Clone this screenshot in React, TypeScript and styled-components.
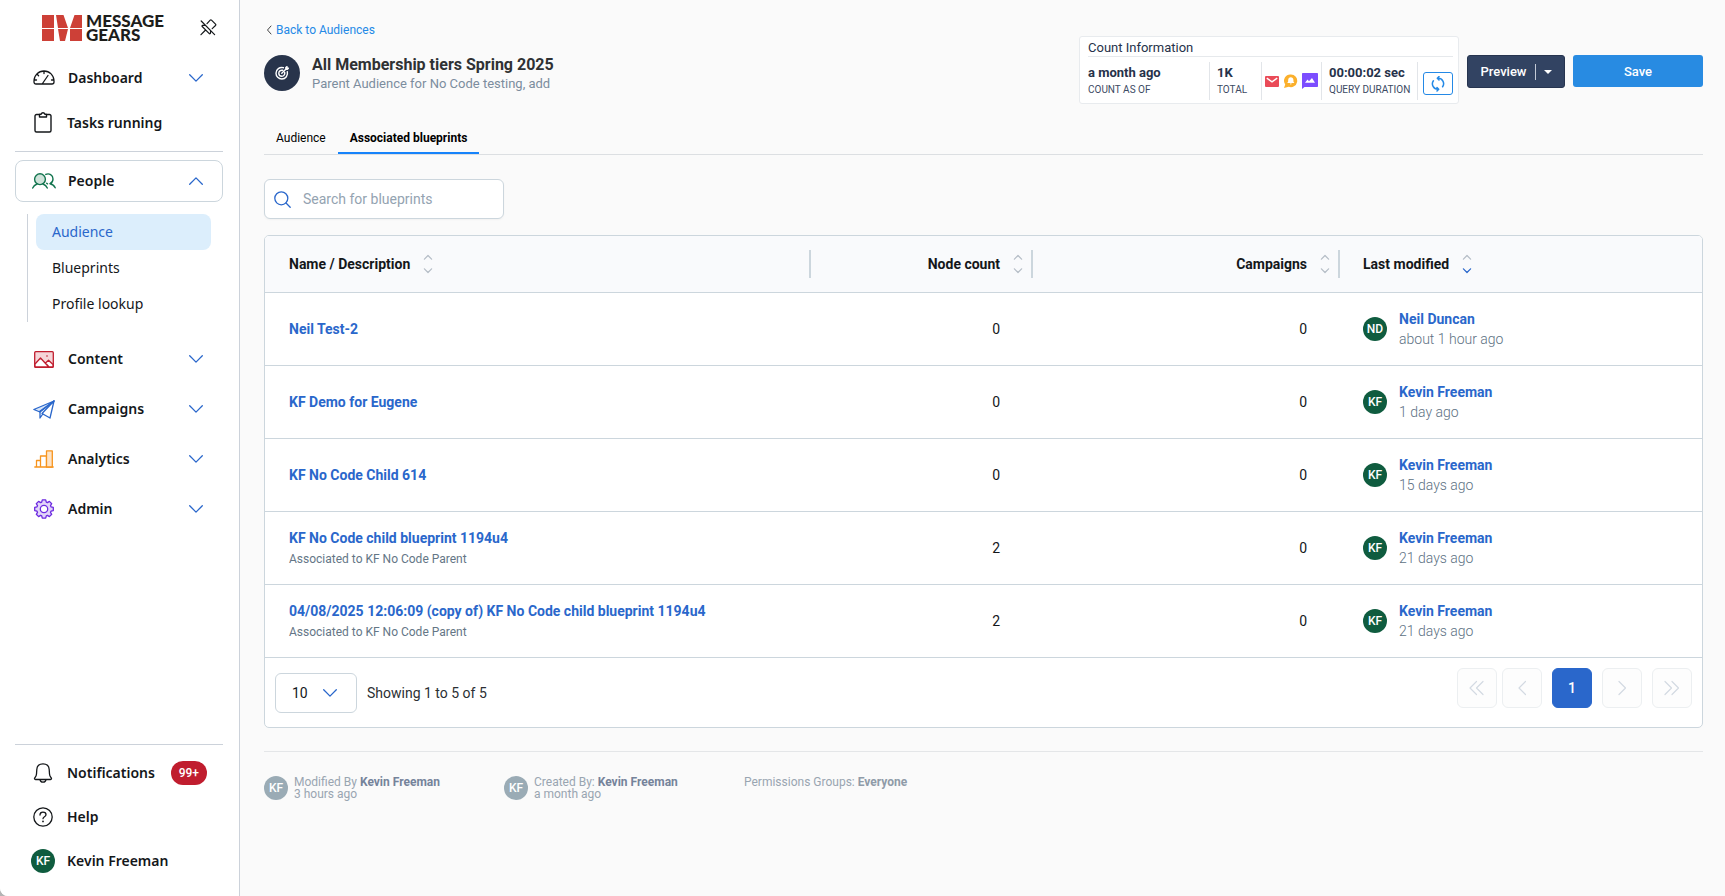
import React from "react";
import styled, { createGlobalStyle, css } from "styled-components";

const roboto = `Roboto, "Liberation Sans", sans-serif`;
const noto = `"Noto Sans", "Open Sans", sans-serif`;

const GlobalStyle = createGlobalStyle`
  *, *::before, *::after { box-sizing: border-box; }
  body { margin: 0; background: #b4b4b4; font-family: ${roboto}; font-size: 14px; color: #14171a; }
  button, input, select { font-family: inherit; }
  h1, h2, p, ul { margin: 0; padding: 0; }
  ul { list-style: none; }
  a { text-decoration: none; }
  svg { display: block; flex: none; }
`;

const Page = styled.div`
  display: flex;
  min-height: 100vh;
  background: #fafafa;
  border-bottom-left-radius: 8px;
  overflow: hidden;
`;

/* ---------- sidebar ---------- */

const Sidebar = styled.aside`
  display: flex;
  flex-direction: column;
  flex: none;
  width: 240px;
  padding: 15px 16px 13px 15px;
  background: #fff;
  border-right: 1px solid #ccd2da;
  font-family: ${noto};
`;

const Brand = styled.div`
  display: flex;
  align-items: flex-start;
  justify-content: space-between;
  height: 40px;
  padding: 0 6px 0 27px;
`;

const BrandLink = styled.a`
  display: flex;
  gap: 4px;
  color: #1d1d1b;
`;

const BrandName = styled.span`
  margin-top: -1px;
  font-family: Lato, ${noto};
  font-size: 17px;
  font-weight: 900;
  line-height: 14px;
`;

const IconButton = styled.button`
  display: flex;
  padding: 4px 0 0;
  border: 0;
  background: none;
  color: #14171a;
  cursor: pointer;
`;

const NavItem = styled.button<{ $height?: number; $single?: boolean; $open?: boolean }>`
  display: flex;
  align-items: center;
  width: 100%;
  height: ${(p) => p.$height ?? 50}px;
  padding: 0 19px 0 ${(p) => (p.$single ? 15 : 16)}px;
  border: 1px solid transparent;
  border-radius: 8px;
  background: none;
  color: #14171a;
  font-size: 14px;
  font-weight: 600;
  line-height: 20px;
  text-align: left;
  cursor: pointer;
  ${(p) =>
    p.$open &&
    css`
      background: #fff;
      border-color: #ccd6dd;
    `}
`;

const NavIcon = styled.span`
  display: flex;
  justify-content: center;
  flex: none;
  width: 24px;
  margin-right: 12px;
`;

const NavText = styled.span`
  flex: 1;
`;

const Rule = styled.hr`
  width: 100%;
  height: 1px;
  margin: 0;
  border: 0;
  background: #ccd2da;
`;

const NavTop = styled.div`
  margin-bottom: 6px;
`;

const NavSections = styled.nav`
  padding-top: 8px;
`;

const SubMenu = styled.ul`
  margin: 12px 12px 12px;
  padding-left: 8px;
  border-left: 1px solid #ccd2da;
`;

const SubLink = styled.a<{ $active?: boolean }>`
  display: block;
  padding: 8px 16px;
  border-radius: 8px;
  background: ${(p) => (p.$active ? "#dceefc" : "transparent")};
  color: ${(p) => (p.$active ? "#2a67cb" : "#14171a")};
  font-size: 14px;
  line-height: 20px;
`;

const NavBottom = styled.div`
  margin-top: auto;
`;

const BottomItems = styled.div`
  padding-top: 6px;
`;

const CountBadge = styled.span`
  margin-right: -4px;
  padding: 0 8px;
  border-radius: 12px;
  background: #c01d2e;
  color: #fff;
  font-family: ${roboto};
  font-size: 12px;
  font-weight: 500;
  line-height: 24px;
`;

const Avatar = styled.span<{ $muted?: boolean }>`
  display: flex;
  align-items: center;
  justify-content: center;
  flex: none;
  width: 24px;
  height: 24px;
  border-radius: 50%;
  background: ${(p) => (p.$muted ? "#9aabb5" : "#0f5c3f")};
  color: #fff;
  font-family: ${roboto};
  font-size: 12px;
  font-weight: 500;
  line-height: 24px;
`;

/* ---------- main ---------- */

const Main = styled.main`
  flex: 1;
  min-width: 0;
  padding: 22px 22px 24px 24px;
`;

const BackLink = styled.a`
  display: inline-flex;
  align-items: center;
  gap: 3px;
  padding-left: 2px;
  color: #2489e6;
  font-size: 12px;
  line-height: 16px;
`;

const Header = styled.header`
  display: flex;
  align-items: flex-start;
  justify-content: space-between;
`;

const TitleRow = styled.div`
  display: flex;
  align-items: center;
  gap: 12px;
  margin-top: 15px;
`;

const RoundIcon = styled.span`
  display: flex;
  align-items: center;
  justify-content: center;
  width: 36px;
  height: 36px;
  border-radius: 50%;
  background: #28344b;
  color: #fff;
`;

const TitleText = styled.div`
  padding-top: 2px;
`;

const Title = styled.h1`
  color: #2f3133;
  font-size: 16px;
  font-weight: 700;
  line-height: 20px;
`;

const Subtitle = styled.p`
  color: #7c8d9e;
  font-size: 13px;
  line-height: 18px;
`;

const Actions = styled.div`
  display: flex;
  align-items: flex-start;
  gap: 8px;
  margin-top: 14px;
`;

const CountCard = styled.section`
  width: 380px;
  height: 68px;
  padding: 2px 5px 0 8px;
  border: 1px solid #e8ebee;
  border-radius: 3px;
  background: #fff;
  color: #26324a;
`;

const CountTitle = styled.h2`
  border-bottom: 1px solid #e6e9ec;
  font-size: 13px;
  font-weight: 400;
  line-height: 17px;
`;

const CountRow = styled.div`
  display: flex;
  align-items: stretch;
  height: 38px;
  margin-top: 5px;
`;

const CountCell = styled.div<{ $width: number; $pad?: number }>`
  width: ${(p) => p.$width}px;
  padding-left: ${(p) => p.$pad ?? 7}px;
  padding-top: 2px;
  border-right: 1px solid #e2e5e9;
  white-space: nowrap;
`;

const CountIcons = styled(CountCell)`
  display: flex;
  align-items: center;
  gap: 4px;
  padding-top: 0;
`;

const CountValue = styled.div`
  font-size: 13px;
  font-weight: 700;
  line-height: 17px;
`;

const CountLabel = styled.div`
  color: #3c4a63;
  font-size: 10px;
  line-height: 18px;
`;

const RefreshButton = styled.button`
  display: flex;
  align-items: center;
  justify-content: center;
  align-self: flex-end;
  width: 30px;
  height: 23px;
  margin: 0 0 5px 5px;
  padding: 0;
  border: 1px solid #2489e6;
  border-radius: 3px;
  background: #fff;
  color: #2489e6;
`;

const Split = styled.div`
  display: flex;
  align-items: center;
  width: 98px;
  height: 33px;
  margin-top: 19px;
  border: 1px solid #26344f;
  border-radius: 3px;
  background: #324362;
`;

const SplitButton = styled.button`
  display: flex;
  align-items: center;
  justify-content: center;
  height: 16px;
  padding: 0;
  border: 0;
  background: none;
  color: #fff;
  font-size: 13px;
  font-weight: 500;

  &:first-child {
    flex: 1;
    padding-left: 4px;
  }
  &:last-child {
    width: 29px;
    padding-right: 4px;
    border-left: 1px solid #c3cad6;
  }
`;

const SaveButton = styled.button`
  width: 130px;
  height: 32px;
  margin-top: 19px;
  border: 0;
  border-radius: 3px;
  background: #288be2;
  color: #fff;
  font-size: 13px;
  font-weight: 500;
`;

const Tabs = styled.nav`
  display: flex;
  margin-top: 19px;
  border-bottom: 1px solid #dcdfe2;
`;

const Tab = styled.a<{ $active?: boolean }>`
  padding: 7px 12px 6px;
  border-bottom: 2px solid ${(p) => (p.$active ? "#1683fb" : "transparent")};
  color: #000;
  font-size: 12px;
  font-weight: ${(p) => (p.$active ? 700 : 400)};
  line-height: 16px;
`;

const SearchBox = styled.label`
  display: flex;
  align-items: center;
  gap: 12px;
  width: 240px;
  height: 40px;
  margin-top: 24px;
  padding: 0 9px;
  border: 1px solid #ccd6dd;
  border-radius: 6px;
  background: #fff;
  color: #2a67cb;
  box-shadow: 0 1px 2px rgba(0, 0, 0, 0.04);
`;

const SearchInput = styled.input`
  flex: 1;
  min-width: 0;
  padding: 0;
  border: 0;
  outline: 0;
  background: none;
  color: #14171a;
  font-size: 14px;
  line-height: 20px;
  &::placeholder {
    color: #94a3b1;
    opacity: 1;
  }
`;

const Panel = styled.section`
  margin-top: 16px;
  border: 1px solid #ccd6dd;
  border-radius: 5px;
  background: #fff;
  overflow: hidden;
`;

const Table = styled.table`
  width: 100%;
  border-collapse: separate;
  border-spacing: 0;
  table-layout: fixed;
`;

const Th = styled.th<{ $width?: string }>`
  width: ${(p) => p.$width ?? "auto"};
  height: 57px;
  padding: 0;
  border-bottom: 1px solid #ccd6dd;
  background: #f9fafc;
  font-size: 14px;
  font-weight: 700;
`;

const ThInner = styled.div<{ $right?: boolean; $line?: boolean }>`
  display: flex;
  align-items: center;
  justify-content: ${(p) => (p.$right ? "flex-end" : "flex-start")};
  gap: 13px;
  height: 28px;
  padding: 0 8px 0 ${(p) => (p.$line ? 24 : 23)}px;
  border-right: ${(p) => (p.$line ? "2px solid #ccd6dd" : "0")};
`;

const SortButton = styled.button`
  display: flex;
  padding: 0;
  border: 0;
  background: none;
`;

const Td = styled.td<{ $right?: boolean }>`
  height: 73px;
  padding: 0 ${(p) => (p.$right ? 33 : 24)}px 0 24px;
  border-bottom: 1px solid #ccd6dd;
  text-align: ${(p) => (p.$right ? "right" : "left")};
  font-size: 14px;
  line-height: 20px;

  &:last-child {
    padding-left: 23px;
  }
`;

const BoldLink = styled.a`
  color: #2a67cb;
  font-weight: 700;
`;

const Assoc = styled.div`
  padding-top: 1px;
  color: #647686;
  font-size: 12px;
  line-height: 20px;
`;

const Person = styled.div`
  display: flex;
  align-items: center;
  gap: 12px;
`;

const When = styled.div`
  color: #5d7183;
  font-weight: 300;
`;

const TableFooter = styled.div`
  display: flex;
  justify-content: space-between;
  height: 69px;
  padding: 10px;
`;

const PageSize = styled.label`
  display: flex;
  align-items: center;
  align-self: flex-start;
  gap: 10px;
  margin-top: 5px;
  color: #2b2f33;
`;

const SelectWrap = styled.span`
  display: grid;
  align-items: center;
  width: 82px;
  height: 40px;
  & > * {
    grid-area: 1 / 1;
  }
  & > svg {
    justify-self: end;
    margin-right: 20px;
    pointer-events: none;
  }
`;

const Select = styled.select`
  appearance: none;
  width: 100%;
  height: 40px;
  padding: 0 16px;
  border: 1px solid #ccd6dd;
  border-radius: 6px;
  background: #fff;
  color: #14171a;
  font-size: 14px;
`;

const Pager = styled.nav`
  display: flex;
  gap: 10px;
`;

const PagerPair = styled.div`
  display: flex;
  gap: 5px;
`;

const PageButton = styled.button<{ $current?: boolean }>`
  display: flex;
  align-items: center;
  justify-content: center;
  width: 40px;
  height: 40px;
  padding: 0;
  border: 1px solid ${(p) => (p.$current ? "#2a67cb" : "#eceff1")};
  border-radius: 6px;
  background: ${(p) => (p.$current ? "#2a67cb" : "#fdfdfd")};
  color: ${(p) => (p.$current ? "#fff" : "#d3dae2")};
  font-size: 14px;
  font-weight: 500;
`;

const Meta = styled.footer`
  display: flex;
  margin-top: 23px;
  padding-top: 24px;
  border-top: 1px solid #e4e6e8;
  color: #99a5b1;
  font-size: 12px;
  line-height: 12px;
`;

const MetaItem = styled.div`
  display: flex;
  gap: 6px;
  width: 240px;
`;

const MetaName = styled.strong<{ $soft?: boolean }>`
  color: ${(p) => (p.$soft ? "#8f9ba8" : "#75839a")};
`;

/* ---------- icons ---------- */

const stroke = {
  fill: "none",
  stroke: "currentColor",
  strokeLinecap: "round",
  strokeLinejoin: "round",
} as const;

const Chevron = ({ up }: { up?: boolean }) => (
  <svg width="14" height="8" viewBox="0 0 14 8" {...stroke} stroke="#2a67cb" strokeWidth="1.3">
    <path d={up ? "M.7 7.2 7 .9l6.3 6.3" : "M.7.8 7 7.1 13.3.8"} />
  </svg>
);

const LogoMark = () => (
  <svg width="40" height="26" viewBox="0 0 40 26" fill="#cd4037">
    <path d="M0 0h12v13H0zM0 14h12v12H0zM14 0h7.500L26 13H16zM32.500 0H40v13H28zM16 14h10l-3 12h-5zM28 14h12v12H28z" />
  </svg>
);

const PinOff = () => (
  <svg width="17" height="17" viewBox="0 0 17 17" {...stroke} strokeWidth="1.2">
    <path d="M1.2 2 14.6 15.6M7 4.6l3.2-3.4c.4-.4.9-.4 1.3 0l4 4c.4.4.4.9 0 1.3L12.2 9.6M5 6.100 2.600 6.400c-.6.1-.8.7-.4 1.1l7.100 7.100c.4.4 1 .2 1.1-.4l.3-2.300M5.600 11 1 15.700" />
  </svg>
);

const DashboardIcon = () => (
  <svg width="22" height="15" viewBox="0 0 22 15" {...stroke} strokeWidth="1.3">
    <path d="M1 12V11C1 5.400 5.400 1 11 1s10 4.400 10 10v1c0 1.200-.8 2-2 2H3c-1.200 0-2-.8-2-2zM11 1.200v2.300M4.200 4.300l1.400 1.400M1.200 10h2.300M18.500 10h2.300M9.500 13.500 15 5.500" />
  </svg>
);

const ClipboardIcon = () => (
  <svg width="18" height="21" viewBox="0 0 18 21" {...stroke} strokeWidth="1.4">
    <path d="M5.500 2.500H2.500c-.8 0-1.500.6-1.500 1.500v14.500c0 .8.600 1.500 1.500 1.500h13c.8 0 1.500-.6 1.500-1.500V4c0-.8-.6-1.500-1.500-1.500h-3M5.500 2.300h1.600C7.400 1.400 8 .8 9 .8s1.600.6 1.900 1.500h1.600V5h-7z" />
  </svg>
);

const PeopleIcon = () => (
  <svg width="24" height="16" viewBox="0 0 24 16" {...stroke} stroke="#12744e" strokeWidth="1.4">
    <circle cx="8" cy="6.200" r="5.400" fill="#cfe3da" />
    <path d="M.7 15c.8-2 2.300-3.300 4.300-4M15.300 15c-.8-2-2.300-3.300-4.300-4M13.800 1.400c3.300-1.600 7.200.7 7.200 4.500 0 2.200-1.200 3.900-3 4.800 2.400.5 4.200 1.900 5.200 4.100M15.500 10.800c-.3-.2-.6-.4-.8-.6" />
  </svg>
);

const ContentIcon = () => (
  <svg width="20" height="17" viewBox="0 0 20 17" {...stroke} stroke="#c01d2e" strokeWidth="1.3">
    <rect x=".7" y=".7" width="18.600" height="15.600" rx="1" fill="#f5d5d8" />
    <path fill="#fff" d="M1 13l5.500-6 8.300 9H1zM11.500 12l3-2.700 4.500 4.200V16h-4z" />
    <circle cx="13" cy="5" r=".8" fill="#c01d2e" stroke="none" />
  </svg>
);

const CampaignIcon = () => (
  <svg width="22" height="19" viewBox="0 0 22 19" {...stroke} stroke="#2a67cb" strokeWidth="1.3">
    <path fill="#d7e5f9" d="M.8 9.500 21 1 7 12z" />
    <path fill="#fff" d="M21 1 17 18l-8-4.500z" />
    <path d="M7 12v6l2.800-4M6.500 11.500 21 1" />
  </svg>
);

const AnalyticsIcon = () => (
  <svg width="20" height="18" viewBox="0 0 20 18" {...stroke} stroke="#f7941d" strokeWidth="1.3">
    <path d="M.8 17h18.400M2.500 17v-6.500h4V17M6.500 17V6h6v11" />
    <path fill="#fde3c6" d="M12.500 17V.9h5.800V17z" />
  </svg>
);

const GearIcon = () => (
  <svg width="20" height="20" viewBox="0 0 20 20" {...stroke} stroke="#6d2be0" strokeWidth="1.3">
    <path
      fill="#e2d5f9"
      d="M8.300.8h3.400l.6 2.300 1.100.5 2-1.200 2.300 2.300-1.200 2 .5 1.100 2.300.6v3.200l-2.300.6-.5 1.100 1.200 2-2.300 2.300-2-1.200-1.100.5-.6 2.300H8.300l-.6-2.300-1.100-.5-2 1.200-2.300-2.300 1.200-2-.5-1.100-2.300-.6V8.400L3 7.800l.5-1.100-1.200-2 2.300-2.300 2 1.200 1.100-.5z"
    />
    <circle cx="10" cy="10" r="3.700" fill="#fff" />
  </svg>
);

const BellIcon = () => (
  <svg width="20" height="20" viewBox="0 0 20 20" {...stroke} strokeWidth="1.3">
    <path d="M10 .8c3.500 0 6 2.300 6.200 5.700l.3 4.500c.1 1.600.6 2.700 1.600 3.700.7.700.5 1.800-.6 1.800h-15c-1.100 0-1.300-1.100-.6-1.800 1-1 1.500-2.100 1.600-3.700l.3-4.500C4 3.100 6.500.8 10 .8zM7 16.700c.2 1.600 1.400 2.500 3 2.500s2.800-.9 3-2.500" />
  </svg>
);

const HelpIcon = () => (
  <svg width="20" height="20" viewBox="0 0 20 20" {...stroke} strokeWidth="1.3">
    <circle cx="10" cy="10" r="9.200" />
    <path d="M7 8c0-1.700 1.300-2.800 3-2.800s3 1 3 2.600c0 2-3 2-3 3.900" />
    <circle cx="10" cy="14.400" r=".9" fill="currentColor" stroke="none" />
  </svg>
);

const TargetIcon = () => (
  <svg width="14" height="14" viewBox="0 0 14 14" {...stroke} strokeWidth="1.4">
    <path d="M8.400 1.700C4.700.6 1 3.300 1 7.200c0 3.200 2.600 5.800 5.800 5.800 3.800 0 6.500-3.600 5.500-7.300" />
    <path d="M7.600 4.300C5.500 3.900 3.800 5.300 3.800 7.200c0 1.700 1.300 3 3 3 1.900 0 3.300-1.700 2.900-3.700M6.800 7.200l4-4M10.800 3.200V1.500L12 .7v1.500h1.400l-1 1z" />
  </svg>
);

const MailIcon = () => (
  <svg width="14" height="11" viewBox="0 0 14 11">
    <rect width="14" height="11" rx="1" fill="#ea4b58" />
    <path d="M1.800 2.200 7 5.800l5.200-3.600" fill="none" stroke="#fff" strokeWidth="1.4" />
  </svg>
);

const PushIcon = () => (
  <svg width="15" height="15" viewBox="0 0 15 15">
    <path d="M8 .5a6.300 6.300 0 1 1-2.300 12.200L1 14l1.200-3.600A6.300 6.300 0 0 1 8 .5z" fill="#fbb02c" />
    <path
      d="M7.800 3.300c1.600 0 2.500 1 2.600 2.500l.1 2 .9 1.200H4.200l.9-1.200.1-2c.1-1.500 1-2.500 2.600-2.500zM6.900 9.600h1.800c0 1.200-1.800 1.200-1.800 0z"
      fill="#fff"
    />
  </svg>
);

const MmsIcon = () => (
  <svg width="16" height="16" viewBox="0 0 16 16">
    <path d="M1 0h14c.6 0 1 .4 1 1v12c0 .6-.4 1-1 1H2.500L0 16V1c0-.6.4-1 1-1z" fill="#7c4dff" />
    <path d="M3 9.800 5.500 6.500 7 8.300l3-3.300 3 4.800z" fill="#fff" />
  </svg>
);

const RefreshIcon = () => (
  <svg width="14" height="16" viewBox="0 0 14 16" {...stroke} strokeWidth="1.5">
    <path d="M6.500 2.300H7a5.400 5.400 0 0 1 4.600 8.500M7.500 13.300H7A5.400 5.400 0 0 1 2.400 4.800M8 .6 6.300 2.300 8 4M6 11.600l1.700 1.700L6 15" />
  </svg>
);

const SearchIcon = () => (
  <svg width="17" height="17" viewBox="0 0 17 17" {...stroke} strokeWidth="1.3">
    <circle cx="7.300" cy="7.300" r="6.500" />
    <path d="m12 12 4.200 4.200" />
  </svg>
);

const SortIcon = ({ active }: { active?: boolean }) => (
  <svg width="10" height="20" viewBox="0 0 10 20" {...stroke} stroke="#b5bdc6" strokeWidth="1.2">
    <path d="M1.400 5.200 5 1.500l3.600 3.700" />
    <path d="M1.400 14.800 5 18.500l3.600-3.700" stroke={active ? "#2a67cb" : "#b5bdc6"} />
  </svg>
);

const PageArrow = ({ double, right }: { double?: boolean; right?: boolean }) => (
  <svg
    width={double ? 16 : 8}
    height="16"
    viewBox={double ? "0 0 16 16" : "0 0 8 16"}
    {...stroke}
    strokeWidth="1.2"
  >
    {right ? <path d="m1 1.500 6.500 6.500L1 14.500" /> : <path d="M7.500 1.500 1 8l6.500 6.500" />}
    {double && (right ? <path d="m8 1.500 6.500 6.500L8 14.500" /> : <path d="M14 1.500 7.500 8l6.500 6.500" />)}
  </svg>
);

/* ---------- data ---------- */

const sections = [
  { label: "Content", icon: <ContentIcon /> },
  { label: "Campaigns", icon: <CampaignIcon /> },
  { label: "Analytics", icon: <AnalyticsIcon /> },
  { label: "Admin", icon: <GearIcon /> },
];

const rows = [
  { name: "Neil Test-2", nodes: 0, campaigns: 0, by: "Neil Duncan", initials: "ND", when: "about 1 hour ago" },
  { name: "KF Demo for Eugene", nodes: 0, campaigns: 0, by: "Kevin Freeman", initials: "KF", when: "1 day ago" },
  { name: "KF No Code Child 614", nodes: 0, campaigns: 0, by: "Kevin Freeman", initials: "KF", when: "15 days ago" },
  {
    name: "KF No Code child blueprint 1194u4",
    note: "Associated to KF No Code Parent",
    nodes: 2,
    campaigns: 0,
    by: "Kevin Freeman",
    initials: "KF",
    when: "21 days ago",
  },
  {
    name: "04/08/2025 12:06:09 (copy of) KF No Code child blueprint 1194u4",
    note: "Associated to KF No Code Parent",
    nodes: 2,
    campaigns: 0,
    by: "Kevin Freeman",
    initials: "KF",
    when: "21 days ago",
  },
];

const columns = [
  { label: "Name / Description", width: "38%", line: true },
  { label: "Node count", width: "222px", right: true, line: true },
  { label: "Campaigns", width: "307px", right: true, line: true },
  { label: "Last modified", sorted: true },
];

export default function App() {
  return (
    <>
      <GlobalStyle />
      <Page>
        <Sidebar>
          <Brand>
            <BrandLink href="#" aria-label="MessageGears">
              <LogoMark />
              <BrandName>
                MESSAGE
                <br />
                GEARS
              </BrandName>
            </BrandLink>
            <IconButton aria-label="Unpin menu">
              <PinOff />
            </IconButton>
          </Brand>
          <NavTop>
            <NavItem $height={45}>
              <NavIcon><DashboardIcon /></NavIcon>
              <NavText>Dashboard</NavText>
              <Chevron />
            </NavItem>
            <NavItem $height={45} $single>
              <NavIcon><ClipboardIcon /></NavIcon>
              <NavText>Tasks running</NavText>
            </NavItem>
          </NavTop>
          <Rule />
          <NavSections>
            <NavItem $height={42} $open aria-expanded="true">
              <NavIcon><PeopleIcon /></NavIcon>
              <NavText>People</NavText>
              <Chevron up />
            </NavItem>
            <SubMenu>
              <li><SubLink href="#" $active aria-current="page">Audience</SubLink></li>
              <li><SubLink href="#">Blueprints</SubLink></li>
              <li><SubLink href="#">Profile lookup</SubLink></li>
            </SubMenu>
            {sections.map((s) => (
              <NavItem key={s.label}>
                <NavIcon>{s.icon}</NavIcon>
                <NavText>{s.label}</NavText>
                <Chevron />
              </NavItem>
            ))}
          </NavSections>
          <NavBottom>
            <Rule />
            <BottomItems>
              <NavItem $height={44} $single>
                <NavIcon><BellIcon /></NavIcon>
                <NavText>Notifications</NavText>
                <CountBadge>99+</CountBadge>
              </NavItem>
              <NavItem $height={44} $single>
                <NavIcon><HelpIcon /></NavIcon>
                <NavText>Help</NavText>
              </NavItem>
              <NavItem $height={44} $single>
                <NavIcon><Avatar>KF</Avatar></NavIcon>
                <NavText>Kevin Freeman</NavText>
              </NavItem>
            </BottomItems>
          </NavBottom>
        </Sidebar>

        <Main>
          <Header>
            <div>
              <BackLink href="#">
                <svg width="7" height="10" viewBox="0 0 7 10" {...stroke} stroke="#444" strokeWidth="1">
                  <path d="M5 1 1.500 5 5 9" />
                </svg>
                Back to Audiences
              </BackLink>
              <TitleRow>
                <RoundIcon><TargetIcon /></RoundIcon>
                <TitleText>
                  <Title>All Membership tiers Spring 2025</Title>
                  <Subtitle>Parent Audience for No Code testing, add</Subtitle>
                </TitleText>
              </TitleRow>
            </div>
            <Actions>
              <CountCard>
                <CountTitle>Count Information</CountTitle>
                <CountRow>
                  <CountCell $width={122} $pad={0}>
                    <CountValue>a month ago</CountValue>
                    <CountLabel>COUNT AS OF</CountLabel>
                  </CountCell>
                  <CountCell $width={52}>
                    <CountValue>1K</CountValue>
                    <CountLabel>TOTAL</CountLabel>
                  </CountCell>
                  <CountIcons $width={60} $pad={3}>
                    <MailIcon />
                    <PushIcon />
                    <MmsIcon />
                  </CountIcons>
                  <CountCell $width={96}>
                    <CountValue>00:00:02 sec</CountValue>
                    <CountLabel>QUERY DURATION</CountLabel>
                  </CountCell>
                  <RefreshButton aria-label="Refresh count">
                    <RefreshIcon />
                  </RefreshButton>
                </CountRow>
              </CountCard>
              <Split>
                <SplitButton>Preview</SplitButton>
                <SplitButton aria-label="More preview options">
                  <svg width="8" height="4" viewBox="0 0 8 4" fill="#fff">
                    <path d="M0 0h8L4 4z" />
                  </svg>
                </SplitButton>
              </Split>
              <SaveButton>Save</SaveButton>
            </Actions>
          </Header>

          <Tabs>
            <Tab href="#">Audience</Tab>
            <Tab href="#" $active aria-current="page">Associated blueprints</Tab>
          </Tabs>

          <SearchBox>
            <SearchIcon />
            <SearchInput type="search" placeholder="Search for blueprints" aria-label="Search for blueprints" />
          </SearchBox>

          <Panel>
            <Table>
              <thead>
                <tr>
                  {columns.map((c) => (
                    <Th key={c.label} $width={c.width}>
                      <ThInner $right={c.right} $line={c.line}>
                        {c.label}
                        <SortButton aria-label={`Sort by ${c.label}`}>
                          <SortIcon active={c.sorted} />
                        </SortButton>
                      </ThInner>
                    </Th>
                  ))}
                </tr>
              </thead>
              <tbody>
                {rows.map((r) => (
                  <tr key={r.name}>
                    <Td>
                      <BoldLink href="#">{r.name}</BoldLink>
                      {r.note && <Assoc>{r.note}</Assoc>}
                    </Td>
                    <Td $right>{r.nodes}</Td>
                    <Td $right>{r.campaigns}</Td>
                    <Td>
                      <Person>
                        <Avatar>{r.initials}</Avatar>
                        <div>
                          <BoldLink href="#">{r.by}</BoldLink>
                          <When>{r.when}</When>
                        </div>
                      </Person>
                    </Td>
                  </tr>
                ))}
              </tbody>
            </Table>
            <TableFooter>
              <PageSize>
                <SelectWrap>
                  <Select defaultValue="10" aria-label="Rows per page">
                    <option>10</option>
                    <option>25</option>
                    <option>50</option>
                  </Select>
                  <Chevron />
                </SelectWrap>
                Showing 1 to 5 of 5
              </PageSize>
              <Pager aria-label="Pages">
                <PagerPair>
                  <PageButton disabled aria-label="First page"><PageArrow double /></PageButton>
                  <PageButton disabled aria-label="Previous page"><PageArrow /></PageButton>
                </PagerPair>
                <PageButton $current aria-current="page">1</PageButton>
                <PageButton disabled aria-label="Next page"><PageArrow right /></PageButton>
                <PageButton disabled aria-label="Last page"><PageArrow double right /></PageButton>
              </Pager>
            </TableFooter>
          </Panel>

          <Meta>
            <MetaItem>
              <Avatar $muted>KF</Avatar>
              <div>
                Modified By <MetaName>Kevin Freeman</MetaName>
                <div>3 hours ago</div>
              </div>
            </MetaItem>
            <MetaItem>
              <Avatar $muted>KF</Avatar>
              <div>
                Created By: <MetaName>Kevin Freeman</MetaName>
                <div>a month ago</div>
              </div>
            </MetaItem>
            <div>
              Permissions Groups: <MetaName $soft>Everyone</MetaName>
            </div>
          </Meta>
        </Main>
      </Page>
    </>
  );
}
